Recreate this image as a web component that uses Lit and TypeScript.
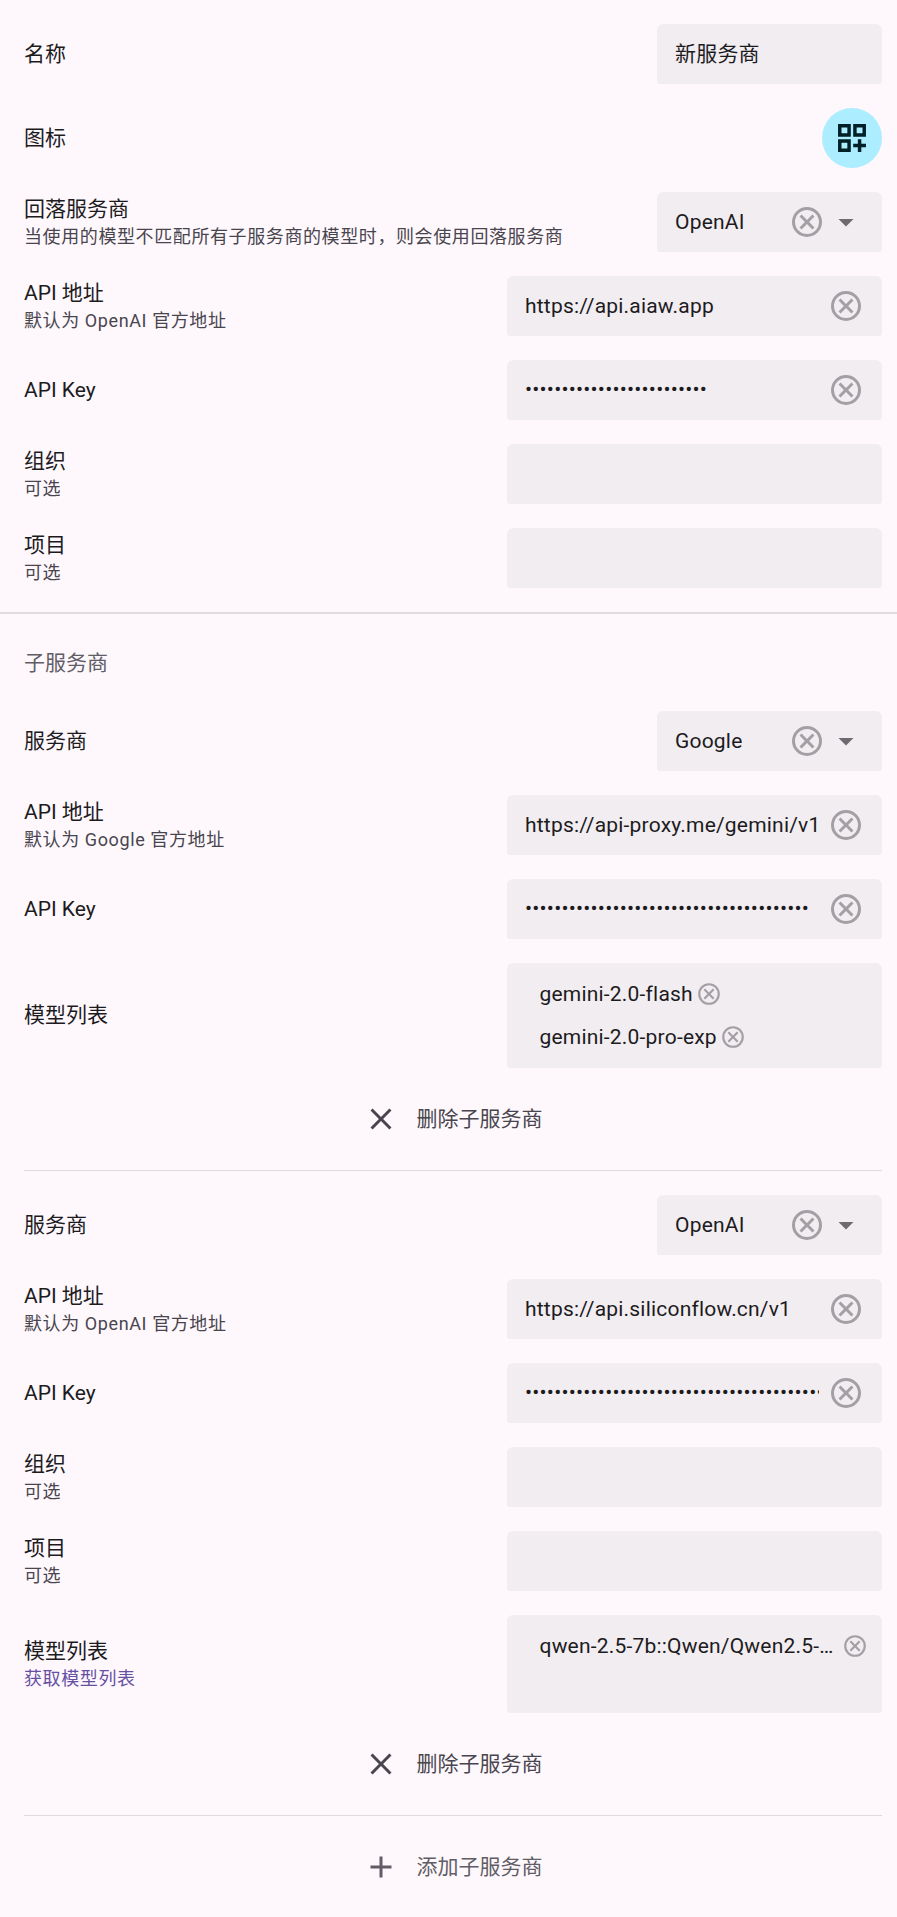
import { LitElement, html, css, svg, nothing } from "lit";
import { customElement } from "lit/decorators.js";

const cancelIcon = (cls: string) => html`<svg class=${cls} viewBox="0 0 24 24">${svg`<path d="M8.4 17 12 13.4 15.6 17 17 15.6 13.4 12 17 8.4 15.6 7 12 10.6 8.4 7 7 8.4 10.6 12 7 15.6ZM12 22a10 10 0 1 1 0-20 10 10 0 0 1 0 20Zm0-2a8 8 0 1 0 0-16 8 8 0 0 0 0 16Z"/>`}</svg>`;
const arrowIcon = html`<svg class="arrow" viewBox="0 0 24 24"><path d="M7 10l5 5 5-5z"/></svg>`;

@customElement("app-root")
export class AppRoot extends LitElement {
  static styles = css`
    :host {
      display: block;
      box-sizing: border-box;
      height: 1917px;
      padding-top: 12px;
      overflow: hidden;
      background: #fef8fd;
      color: #1c1b1e;
      font: 21px/30px Roboto, "Noto Sans CJK SC", sans-serif;
    }
    .row {
      display: flex;
      align-items: center;
      justify-content: space-between;
      padding: 12px 15px 12px 24px;
    }
    .label { line-height: 25px; }
    .caption {
      margin-top: 4px;
      font-size: 18px;
      line-height: 22px;
      letter-spacing: 0.6px;
      color: #49454e;
    }
    .link { color: #6750a4; }
    .field {
      display: flex;
      align-items: center;
      box-sizing: border-box;
      width: 375px;
      height: 60px;
      padding: 0 18px;
      border-radius: 6px 6px 3px 3px;
      background: #f2edf1;
      letter-spacing: 0.2px;
    }
    .short { width: 225px; }
    .value {
      flex: 1;
      min-width: 0;
      margin-right: 9px;
      overflow: hidden;
      white-space: nowrap;
    }
    .secret { padding-bottom: 2px; }
    .clear, .arrow {
      flex: none;
      width: 36px;
      height: 36px;
      fill: #a49fa4;
    }
    .arrow { margin-left: 3px; fill: #6f6a6f; }
    .avatar {
      display: flex;
      align-items: center;
      justify-content: center;
      width: 60px;
      height: 60px;
      border-radius: 50%;
      background: #acedff;
    }
    .avatar svg { width: 36px; height: 36px; fill: #001f26; }
    .chips {
      flex-direction: column;
      align-items: flex-start;
      height: auto;
      padding: 9px 14px 9px 32.5px;
    }
    .chips.two { height: 105px; }
    .chips.one { height: 98px; }
    .chip {
      display: flex;
      align-items: center;
      gap: 3px;
      width: 100%;
      height: 43px;
    }
    .chip .text {
      min-width: 0;
      overflow: hidden;
      white-space: nowrap;
      text-overflow: ellipsis;
    }
    .remove { flex: none; width: 26px; height: 26px; fill: #a49fa4; }
    .sep { height: 2px; margin-top: 12px; background: #e0dce1; }
    .line { height: 1px; margin: 12px 15px 12px 24px; background: #dfdae0; }
    .header {
      display: flex;
      align-items: center;
      height: 85px;
      padding: 12px 24px 0;
      box-sizing: border-box;
      color: #605d66;
    }
    .action {
      display: flex;
      align-items: center;
      justify-content: center;
      gap: 18px;
      height: 78px;
      padding: 0 0 0 8px;
      box-sizing: border-box;
      color: #49454e;
    }
    .action svg { width: 36px; height: 36px; fill: currentColor; }
    .muted { color: #605d66; }
  `;

  row(label: string, control: unknown, caption = "", link = false) {
    return html`<div class="row">
      <div>
        <div class="label">${label}</div>
        ${caption ? html`<div class="caption ${link ? "link" : ""}">${caption}</div>` : nothing}
      </div>
      ${control}
    </div>`;
  }

  input(value = "", cls = "") {
    return html`<div class="field"><span class="value ${cls}">${value}</span>${value ? cancelIcon("clear") : nothing}</div>`;
  }

  secret(count: number) {
    return this.input("•".repeat(count), "secret");
  }

  select(value: string) {
    return html`<div class="field short"><span class="value">${value}</span>${cancelIcon("clear")}${arrowIcon}</div>`;
  }

  chips(items: string[]) {
    return html`<div class="field chips ${items.length > 1 ? "two" : "one"}">
      ${items.map((item) => html`<div class="chip"><span class="text">${item}</span>${cancelIcon("remove")}</div>`)}
    </div>`;
  }

  removeButton() {
    return html`<div class="action">
      <svg viewBox="0 0 24 24"><path d="M6.4 19 5 17.6 10.6 12 5 6.4 6.4 5 12 10.6 17.6 5 19 6.4 13.4 12 19 17.6 17.6 19 12 13.4Z"/></svg>
      <span>删除子服务商</span>
    </div>
    <div class="line"></div>`;
  }

  render() {
    return html`
      ${this.row("名称", html`<div class="field short"><span class="value">新服务商</span></div>`)}
      ${this.row("图标", html`<div class="avatar">
        <svg viewBox="0 0 24 24"><path d="M2.7 11.2V2.7h8.5v8.5Zm2.3-2.3h3.9V5H5Zm-2.3 12.4v-8.5h8.5v8.5ZM5 19h3.9v-3.9H5Zm7.8-7.8V2.7h8.5v8.5Zm2.3-2.3H19V5h-3.9Zm.8 12.4v-3.1h-3.1v-2.3h3.1v-3.1h2.3v3.1h3.1v2.3h-3.1v3.1Z"/></svg>
      </div>`)}
      ${this.row("回落服务商", this.select("OpenAI"), "当使用的模型不匹配所有子服务商的模型时，则会使用回落服务商")}
      ${this.row("API 地址", this.input("https://api.aiaw.app"), "默认为 OpenAI 官方地址")}
      ${this.row("API Key", this.secret(25))}
      ${this.row("组织", this.input(), "可选")}
      ${this.row("项目", this.input(), "可选")}
      <div class="sep"></div>
      <div class="header">子服务商</div>
      ${this.row("服务商", this.select("Google"))}
      ${this.row("API 地址", this.input("https://api-proxy.me/gemini/v1"), "默认为 Google 官方地址")}
      ${this.row("API Key", this.secret(39))}
      ${this.row("模型列表", this.chips(["gemini-2.0-flash", "gemini-2.0-pro-exp"]))}
      ${this.removeButton()}
      ${this.row("服务商", this.select("OpenAI"))}
      ${this.row("API 地址", this.input("https://api.siliconflow.cn/v1"), "默认为 OpenAI 官方地址")}
      ${this.row("API Key", this.secret(51))}
      ${this.row("组织", this.input(), "可选")}
      ${this.row("项目", this.input(), "可选")}
      ${this.row("模型列表", this.chips(["qwen-2.5-7b::Qwen/Qwen2.5-7B-Instruct"]), "获取模型列表", true)}
      ${this.removeButton()}
      <div class="action muted">
        <svg viewBox="0 0 24 24"><path d="M11 19v-6H5v-2h6V5h2v6h6v2h-6v6Z"/></svg>
        <span>添加子服务商</span>
      </div>
    `;
  }
}
